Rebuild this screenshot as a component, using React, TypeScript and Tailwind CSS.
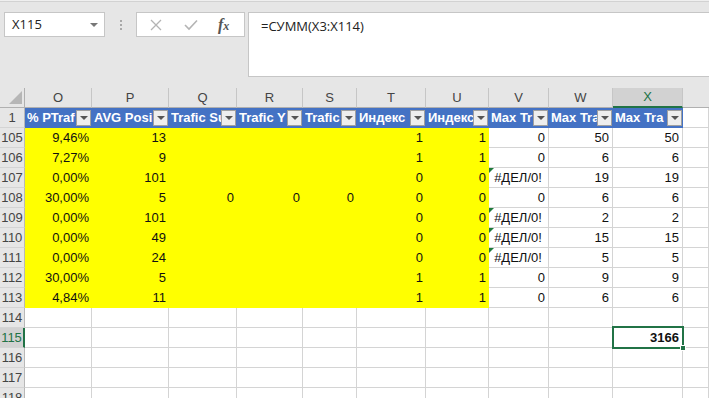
import React from 'react';

const cols = ['O', 'P', 'Q', 'R', 'S', 'T', 'U', 'V', 'W', 'X'];
const heads = ['% PTraf', 'AVG Posi', 'Trafic Su', 'Trafic Y', 'Trafic', 'Индекс', 'Индекс', 'Max Tr', 'Max Tra', 'Max Tra'];

const rows: { n: number; v: string[] }[] = [
  { n: 105, v: ['9,46%', '13', '', '', '', '1', '1', '0', '50', '50'] },
  { n: 106, v: ['7,27%', '9', '', '', '', '1', '1', '0', '6', '6'] },
  { n: 107, v: ['0,00%', '101', '', '', '', '0', '0', '#ДЕЛ/0!', '19', '19'] },
  { n: 108, v: ['30,00%', '5', '0', '0', '0', '0', '0', '0', '6', '6'] },
  { n: 109, v: ['0,00%', '101', '', '', '', '0', '0', '#ДЕЛ/0!', '2', '2'] },
  { n: 110, v: ['0,00%', '49', '', '', '', '0', '0', '#ДЕЛ/0!', '15', '15'] },
  { n: 111, v: ['0,00%', '24', '', '', '', '0', '0', '#ДЕЛ/0!', '5', '5'] },
  { n: 112, v: ['30,00%', '5', '', '', '', '1', '1', '0', '9', '9'] },
  { n: 113, v: ['4,84%', '11', '', '', '', '1', '1', '0', '6', '6'] },
];

const gridCols = 'grid grid-cols-[25px_67px_77px_68px_66px_54px_69px_63px_60px_64px_70px_1fr]';

function RowHead({ n, active }: { n: number | string; active?: boolean }) {
  return (
    <div
      className={`flex h-5 items-center justify-center border-b border-[#d4d4d4] ${
        active ? 'border-r-2 border-r-[#217346] bg-[#d2d2d2] text-[#217346]' : 'border-r border-r-[#b8b8b8] bg-[#e6e6e6] text-[#444]'
      }`}
    >
      {n}
    </div>
  );
}

function FilterBtn() {
  return (
    <div className="mr-[1px] flex h-[16px] w-[15px] shrink-0 items-center justify-center border border-[#a0a0a0] bg-[#eeeeee]">
      <div className="h-0 w-0 border-x-[4px] border-t-[4px] border-x-transparent border-t-[#555]" />
    </div>
  );
}

function EmptyCell() {
  return <div className="h-5 border-b border-r border-[#d4d4d4] bg-white" />;
}

export default function App() {
  return (
    <div className="h-[398px] w-[709px] overflow-hidden bg-white" style={{ fontFamily: '"Liberation Sans", Arial, sans-serif' }}>
      {/* Formula bar */}
      <div className="h-[88px] bg-[#e6e6e6]" style={{ fontFamily: '"Open Sans", "Noto Sans", sans-serif' }}>
        <div className="h-[1px] bg-[#efefef]" />
        <div className="h-[1px] bg-[#d2d2d2]" />
        <div className="flex items-start pl-[4px] pt-[10px]">
          <div className="flex h-[25px] w-[101px] items-center justify-between border border-[#c6c6c6] bg-white pl-[7px] pr-[6px] text-[13px] text-[#222]">
            <span>X115</span>
            <div className="h-0 w-0 border-x-[4px] border-t-[4px] border-x-transparent border-t-[#777]" />
          </div>
          <div className="ml-[15px] flex flex-col gap-[2px] pt-[8px]">
            <div className="h-[2px] w-[2px] bg-[#a8a8a8]" />
            <div className="h-[2px] w-[2px] bg-[#a8a8a8]" />
            <div className="h-[2px] w-[2px] bg-[#a8a8a8]" />
          </div>
          <div className="ml-[14px] flex h-[25px] w-[109px] items-center border border-[#c6c6c6] bg-white">
            <svg width="12" height="12" viewBox="0 0 12 12" className="ml-[13px]">
              <path d="M1 1 L11 11 M11 1 L1 11" stroke="#b4b4b4" strokeWidth="1.3" />
            </svg>
            <svg width="14" height="12" viewBox="0 0 14 12" className="ml-[22px]">
              <path d="M1 6 L5 10 L13 1.5" stroke="#b4b4b4" strokeWidth="1.6" fill="none" />
            </svg>
            <span className="ml-[20px] text-[16px] font-bold italic leading-none text-[#555]" style={{ fontFamily: '"Liberation Serif", serif' }}>
              f<span className="text-[12px]">x</span>
            </span>
          </div>
          <div className="ml-[3px] h-[65px] flex-1 border border-r-0 border-[#c6c6c6] bg-white pl-[12px] pt-[4px] text-[13px] text-[#222]">
            =СУММ(X3:X114)
          </div>
        </div>
      </div>

      {/* Column headers */}
      <div className={`${gridCols} text-[13px]`}>
        <div className="flex h-5 items-end justify-end border-b border-r border-[#b0b0b0] bg-[#e6e6e6] pb-[3px] pr-[2px]">
          <svg width="13" height="13" viewBox="0 0 13 13">
            <path d="M13 0 L13 13 L0 13 Z" fill="#b6b6b6" />
          </svg>
        </div>
        {cols.map((c) =>
          c === 'X' ? (
            <div key={c} className="flex h-5 items-center justify-center border-b-2 border-r border-b-[#217346] border-r-[#c6c6c6] bg-[#d2d2d2] text-[#217346]">
              {c}
            </div>
          ) : (
            <div key={c} className="flex h-5 items-center justify-center border-b border-r border-b-[#b0b0b0] border-r-[#c6c6c6] bg-[#e6e6e6] text-[#444]">
              {c}
            </div>
          ),
        )}
        <div className="h-5 border-b border-[#b0b0b0] bg-[#e6e6e6]" />
      </div>

      {/* Table header row */}
      <div className={`${gridCols} text-[13px]`}>
        <RowHead n={1} />
        {heads.map((h, i) => (
          <div key={i} className="flex h-5 items-center overflow-hidden bg-[#4472c4] pl-[2px]">
            <span className="min-w-0 flex-1 overflow-hidden whitespace-nowrap font-bold text-white">{h}</span>
            <FilterBtn />
          </div>
        ))}
        <EmptyCell />
      </div>

      {/* Data rows */}
      {rows.map((r) => (
        <div key={r.n} className={`${gridCols} text-[13px] text-[#111]`}>
          <RowHead n={r.n} />
          {r.v.map((val, i) => {
            const yellow = i < 7;
            const err = val.startsWith('#');
            return (
              <div
                key={i}
                className={`relative flex h-5 items-center pr-[3px] ${err ? 'justify-center pl-[2px]' : 'justify-end'} ${
                  yellow ? 'bg-[#ffff00]' : 'border-b border-r border-[#d4d4d4] bg-white'
                }`}
              >
                {err && (
                  <div className="absolute left-0 top-0 h-0 w-0 border-r-[5px] border-t-[5px] border-r-transparent border-t-[#1e7a3c]" />
                )}
                {val}
              </div>
            );
          })}
          <EmptyCell />
        </div>
      ))}

      {/* Empty rows */}
      {[114, 115, 116, 117, 118].map((n) => (
        <div key={n} className={`${gridCols} text-[13px] text-[#111]`}>
          <RowHead n={n} active={n === 115} />
          {cols.map((c) =>
            n === 115 && c === 'X' ? (
              <div key={c} className="relative flex h-5 items-center justify-end border-b border-r border-[#d4d4d4] bg-white pr-[3px] font-bold">
                3166
                <div className="absolute -left-[1px] -top-[2px] bottom-[-2px] right-[-2px] border-2 border-[#217346]" />
                <div className="absolute -bottom-[4px] -right-[4px] h-[6px] w-[6px] border border-white bg-[#217346]" />
              </div>
            ) : (
              <EmptyCell key={c} />
            ),
          )}
          <EmptyCell />
        </div>
      ))}
    </div>
  );
}
